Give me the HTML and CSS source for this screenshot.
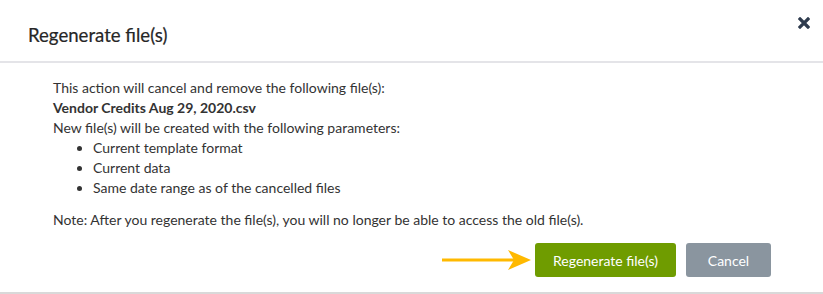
FILE: index.html
```html
<!DOCTYPE html>
<html>
<head>
<meta charset="utf-8">
<link rel="stylesheet" href="styles.css">
</head>
<body>
<div class="dialog">
  <div class="header">
    <h1 class="title">Regenerate file(s)</h1>
    <button class="close" aria-label="Close">
      <svg width="12" height="12" viewBox="0 0 12 12"><path d="M2 2 L10 10 M10 2 L2 10" stroke="#2e3b4e" stroke-width="3.2" stroke-linecap="square"/></svg>
    </button>
  </div>
  <div class="body">
    <p class="line">This action will cancel and remove the following file(s):</p>
    <p class="line bold">Vendor Credits Aug 29, 2020.csv</p>
    <p class="line">New file(s) will be created with the following parameters:</p>
    <ul class="list">
      <li>Current template format</li>
      <li>Current data</li>
      <li>Same date range as of the cancelled files</li>
    </ul>
    <p class="line note">Note: After you regenerate the file(s), you will no longer be able to access the old file(s).</p>
  </div>
  <div class="footer">
    <svg class="arrow" width="92" height="22" viewBox="0 0 92 22"><path d="M2 9.5 H72 V9.5 H79 V12.5 H2 Z" fill="#ffb900"/><path d="M68 1 L91 11 L68 21 L74 11 Z" fill="#ffb900"/></svg>
    <button class="btn btn-primary">Regenerate file(s)</button>
    <button class="btn btn-secondary">Cancel</button>
  </div>
</div>
</body>
</html>
```
FILE: styles.css
```css
html, body {
  margin: 0;
  padding: 0;
  background: #ffffff;
}
body {
  font-family: Lato, "Noto Sans", sans-serif;
  color: #333333;
}
.dialog {
  width: 823px;
  height: 294px;
  box-sizing: border-box;
  border-bottom: 2px solid #d9d9d9;
}
.header {
  height: 63px;
  box-sizing: border-box;
  display: flex;
  justify-content: space-between;
  align-items: flex-start;
  padding: 17px 13px 0 28px;
  border-bottom: 2px solid #e4e4e8;
}
.title {
  margin: 7px 0 0 0;
  font-size: 18.6px;
  line-height: 22px;
  font-weight: 400;
  color: #262626;
  -webkit-text-stroke: 0.2px #262626;
}
.close {
  border: 0;
  background: none;
  padding: 0;
  width: 12px;
  height: 12px;
  display: block;
}
.close svg { display: block; }
.body {
  padding: 15px 53px 0 53px;
  font-size: 14px;
  line-height: 20px;
}
.line { margin: 0; }
.bold { font-weight: 700; }
.list {
  margin: 0;
  padding-left: 40px;
}
.note { margin-top: 12px; }
.footer {
  display: flex;
  justify-content: flex-end;
  align-items: center;
  padding: 13px 52px 0 0;
}
.arrow {
  display: block;
  margin-right: 3px;
}
.btn {
  height: 34px;
  border: 0;
  border-radius: 3px;
  font-family: Lato, "Noto Sans", sans-serif;
  font-size: 14px;
  color: #ffffff;
  padding: 0;
}
.btn-primary {
  width: 141px;
  background: #6f9c00;
}
.btn-secondary {
  width: 85px;
  margin-left: 10px;
  background: #8a959f;
}
```
